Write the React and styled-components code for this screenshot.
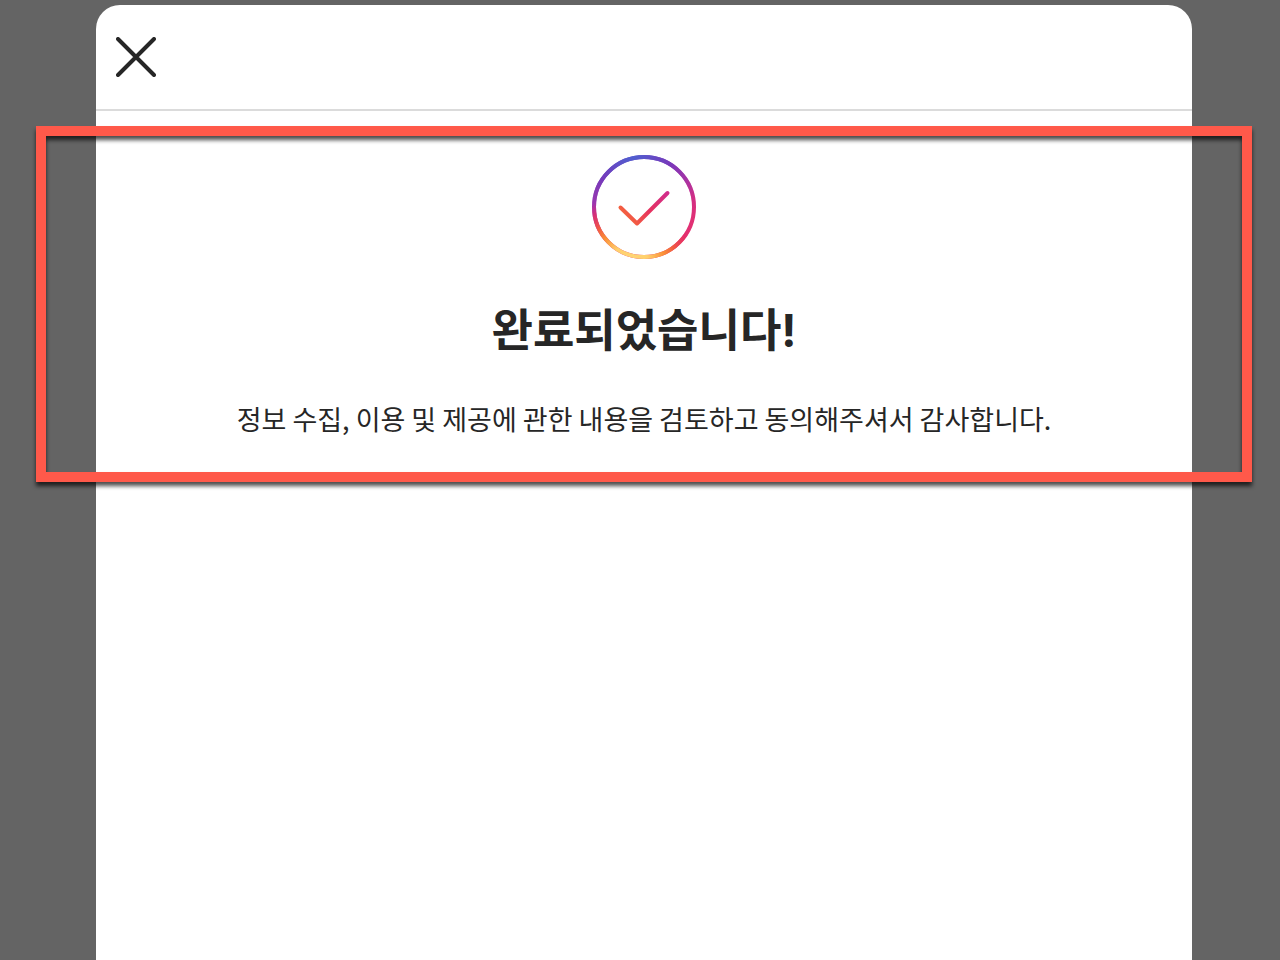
import React from 'react';
import styled, { createGlobalStyle } from 'styled-components';

const App = () => {
  return (
    <>
      <GlobalStyle />
      <Overlay>
        <Dialog role="dialog" aria-labelledby="dialog-title">
          <Header>
            <CloseButton type="button" aria-label="닫기">
              <CloseIcon />
            </CloseButton>
          </Header>
          <Confirmation>
            <CheckIcon />
            <Title id="dialog-title">완료되었습니다!</Title>
            <Message>
              정보 수집, 이용 및 제공에 관한 내용을 검토하고 동의해주셔서 감사합니다.
            </Message>
            <Highlight />
          </Confirmation>
        </Dialog>
      </Overlay>
    </>
  );
};

const CloseIcon = () => (
  <svg width="40" height="40" viewBox="0 0 40 40" fill="none" aria-hidden="true">
    <path
      d="M2 2 38 38M38 2 2 38"
      stroke="#262626"
      strokeWidth="4"
      strokeLinecap="round"
    />
  </svg>
);

const CheckIcon = () => (
  <svg width="104" height="104" viewBox="0 0 104 104" fill="none" aria-hidden="true">
    <defs>
      <linearGradient id="sweep" gradientUnits="userSpaceOnUse" x1="28" y1="0" x2="76" y2="104">
        <stop offset="0" stopColor="#5558cc" />
        <stop offset="0.3" stopColor="#9b36b7" />
        <stop offset="0.6" stopColor="#d92d7e" />
        <stop offset="1" stopColor="#e8336a" />
      </linearGradient>
      <radialGradient id="purple" gradientUnits="userSpaceOnUse" cx="40" cy="-2" r="88">
        <stop offset="0" stopColor="#4c63d2" />
        <stop offset="0.45" stopColor="#7638ba" stopOpacity="0.95" />
        <stop offset="1" stopColor="#c42d92" stopOpacity="0" />
      </radialGradient>
      <radialGradient id="warm" gradientUnits="userSpaceOnUse" cx="38" cy="108" r="70">
        <stop offset="0" stopColor="#ffd778" />
        <stop offset="0.26" stopColor="#ffd06c" />
        <stop offset="0.5" stopColor="#fa9036" />
        <stop offset="0.66" stopColor="#f15b42" />
        <stop offset="0.86" stopColor="#e62d65" stopOpacity="0.7" />
        <stop offset="1" stopColor="#d92d7e" stopOpacity="0" />
      </radialGradient>
      <linearGradient id="tick" gradientUnits="userSpaceOnUse" x1="37" y1="70" x2="75" y2="38">
        <stop offset="0" stopColor="#f6683a" />
        <stop offset="0.5" stopColor="#e6325f" />
        <stop offset="1" stopColor="#d12d8b" />
      </linearGradient>
    </defs>
    <circle cx="52" cy="52" r="50" stroke="url(#sweep)" strokeWidth="4" />
    <circle cx="52" cy="52" r="50" stroke="url(#purple)" strokeWidth="4" />
    <circle cx="52" cy="52" r="50" stroke="url(#warm)" strokeWidth="4" />
    <path
      d="M28.5 52.5 45 68.5 75.5 38"
      stroke="url(#tick)"
      strokeWidth="4"
      strokeLinecap="round"
      strokeLinejoin="round"
    />
  </svg>
);

const GlobalStyle = createGlobalStyle`
  * {
    box-sizing: border-box;
  }

  body {
    margin: 0;
    background: #646464;
    color: #262626;
    font-family: "Noto Sans CJK KR", "Noto Sans", sans-serif;
  }
`;

const Overlay = styled.div`
  display: flex;
  min-height: 100vh;
  padding: 5px 88px 0 96px;
`;

const Dialog = styled.main`
  flex: 1;
  min-width: 0;
  background: #fff;
  border-radius: 24px 24px 0 0;
`;

const Header = styled.header`
  display: flex;
  align-items: center;
  padding: 32px 20px;
  border-bottom: 2px solid #dbdbdb;
`;

const CloseButton = styled.button`
  display: flex;
  padding: 0;
  border: 0;
  background: none;
  cursor: pointer;
`;

const Confirmation = styled.section`
  position: relative;
  display: flex;
  flex-direction: column;
  align-items: center;
  margin-top: 15px;
  padding: 29px 24px 43px;
  text-align: center;
`;

const Title = styled.h1`
  margin: 42px 0 38px;
  font-family: Inter, "Noto Sans CJK KR", sans-serif;
  font-size: 45px;
  font-weight: 700;
  line-height: 60px;
`;

const Message = styled.p`
  margin: 0;
  font-size: 27px;
  line-height: 40px;
`;

const Highlight = styled.div`
  position: absolute;
  inset: 0 -60px;
  border: 10px solid #ff594a;
  filter: drop-shadow(0 4px 2px rgba(0, 0, 0, 0.7));
  pointer-events: none;
`;

export default App;
